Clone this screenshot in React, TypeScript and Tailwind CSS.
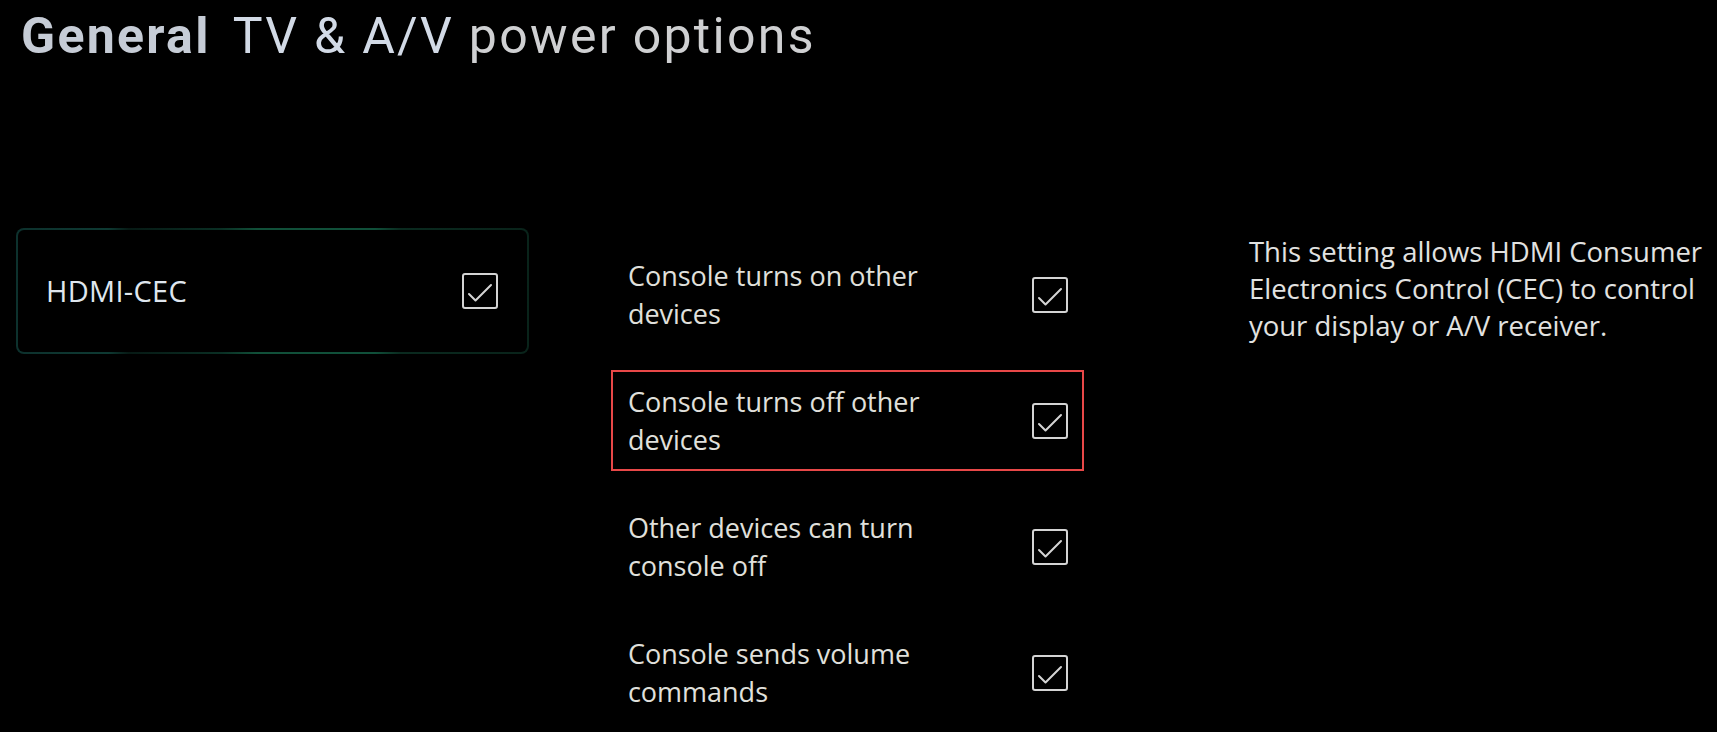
import React from "react";

type Option = {
  label: string[];
  highlighted?: boolean;
};

const options: Option[] = [
  { label: ["Console turns on other", "devices"] },
  { label: ["Console turns off other", "devices"], highlighted: true },
  { label: ["Other devices can turn", "console off"] },
  { label: ["Console sends volume", "commands"] },
];

function CheckBox() {
  return (
    <svg width="36" height="36" viewBox="0 0 36 36" className="shrink-0">
      <rect x="1" y="1" width="34" height="34" rx="2" fill="none" stroke="#d4d4d4" strokeWidth="2" />
      <polyline points="7,21 13.5,27.5 29,12" fill="none" stroke="#d4d4d4" strokeWidth="2" strokeLinejoin="round" strokeLinecap="round" />
    </svg>
  );
}

export default function App() {
  return (
    <div className="w-full h-[732px] bg-black overflow-hidden text-[#e2e2e2] font-['Open_Sans',sans-serif]">
      {/* header */}
      <h1 className="pl-[21px] pt-[6px] h-[66px] text-[50px] leading-[60px] tracking-[2.3px] font-['Roboto',sans-serif] whitespace-nowrap">
        <span className="font-bold text-[#c6ccd6]">General</span>
        <span className="ml-[22px] text-[#d2dae6]">TV &amp; A/V</span>
        <span className="text-[#cfd0d2]"> power options</span>
      </h1>

      <div className="flex mt-[162px]">
        {/* left menu */}
        <div className="ml-[16px] w-[515px] h-[126px] p-[2px] rounded-[8px] bg-[linear-gradient(90deg,#0d312d_0%,#0e3a33_18%,#071a15_22%,#0a2f24_40%,#115039_47%,#10503a_70%,#0a2a1f_75%,#09231a_100%)]">
          <div className="h-full rounded-[6px] bg-black flex items-center justify-between pl-[28px] pr-[29px]">
            <span className="text-[29px] tracking-[0.3px] text-[#dfe6ee]">HDMI-CEC</span>
            <CheckBox />
          </div>
        </div>

        {/* options */}
        <div className="ml-[82px] mt-[16px] w-[475px] flex flex-col gap-[25px]">
          {options.map((o) => (
            <div
              key={o.label.join(" ")}
              className={
                "h-[101px] flex items-center justify-between pl-[15px] pr-[14px] border-2 " +
                (o.highlighted ? "border-[#e84848]" : "border-transparent")
              }
            >
              <div className="text-[27px] leading-[38px] text-[#e0e0dc]">
                {o.label.map((l) => (
                  <div key={l}>{l}</div>
                ))}
              </div>
              <CheckBox />
            </div>
          ))}
        </div>

        {/* description */}
        <div className="ml-[165px] mt-[5px] w-[470px] text-[27.5px] leading-[37px] text-[#e2e2e0]">
          <p>This setting allows HDMI Consumer</p>
          <p>Electronics Control (CEC) to control</p>
          <p>your display or A/V receiver.</p>
        </div>
      </div>
    </div>
  );
}
